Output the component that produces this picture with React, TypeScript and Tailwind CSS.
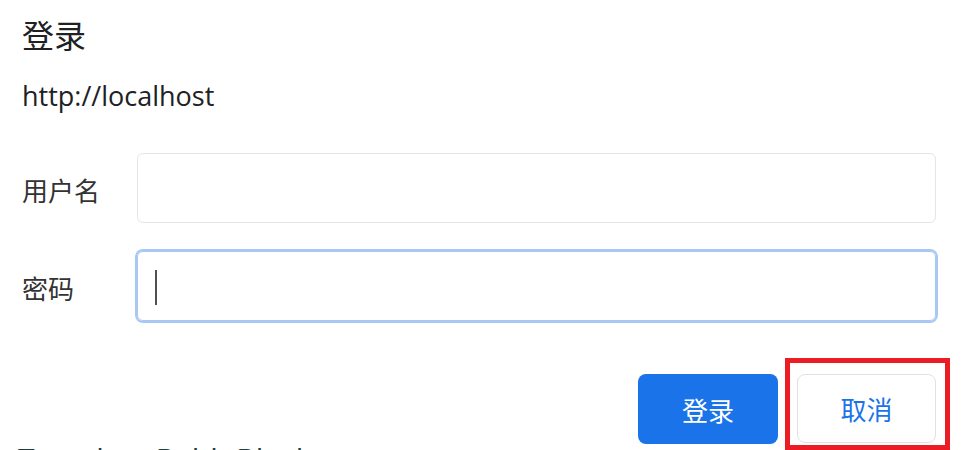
const cjk = "font-['Noto_Sans_CJK_SC','Noto_Sans',sans-serif]";

function Field({ label, focused }: { label: string; focused?: boolean }) {
  return (
    <div className="flex items-center">
      <div className={`w-[115px] shrink-0 pt-[4px] text-[26px] leading-[26px] text-[#333] ${cjk}`}>
        {label}
      </div>
      <div
        className={
          focused
            ? "flex h-[70px] flex-1 items-center rounded-[6px] border border-[#a9c8f1] pl-[17px] ring-2 ring-[#a9c8f1]"
            : "flex h-[70px] flex-1 items-center rounded-[6px] border border-[#e5e5e8] pl-[17px]"
        }
      >
        {focused && <span className="mt-[2px] h-[35px] w-[2px] bg-[#505050]" />}
      </div>
    </div>
  );
}

export default function App() {
  return (
    <div className="relative h-[450px] w-[961px] overflow-hidden bg-white">
      <div className="pl-[22px] pr-[25px] pt-[18px]">
        <h1 className={`text-[32px] leading-[32px] font-normal text-[#202124] ${cjk}`}>登录</h1>
        <p className="mt-[33px] font-['Open_Sans',sans-serif] text-[27px] leading-[26px] text-[#202124]">
          http://localhost
        </p>

        <div className="mt-[44px]">
          <Field label="用户名" />
        </div>
        <div className="mt-[28px]">
          <Field label="密码" focused />
        </div>

        <div className="mt-[53px] flex justify-end gap-[19px]">
          <button className={`h-[70px] w-[140px] rounded-[8px] bg-[#1a73e8] text-[26px] text-white ${cjk}`}>
            登录
          </button>
          <div className="relative">
            <button
              className={`h-[69px] w-[139px] rounded-[8px] border border-[#dfe1e5] bg-white text-[26px] text-[#1a73e8] ${cjk}`}
            >
              取消
            </button>
            <div className="pointer-events-none absolute -top-[16px] -left-[12px] -right-[14px] -bottom-[6px] border-[5px] border-[#ec1c24]" />
          </div>
        </div>

        <p className="-ml-[4px] mt-0 font-['Open_Sans',sans-serif] text-[30px] leading-[30px] text-[#1f3b3b]">
          Translate Babb Blocks
        </p>
      </div>
    </div>
  );
}
